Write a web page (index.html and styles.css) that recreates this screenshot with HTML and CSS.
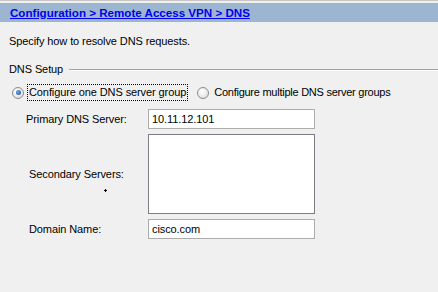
FILE: index.html
```html
<!DOCTYPE html>
<html lang="en">
<head>
    <meta charset="UTF-8">
    <title>Remote Access VPN - DNS</title>
    <link rel="stylesheet" href="styles.css">
</head>
<body>
    <div class="page">
        <div class="titlebar">
            <a href="#">Configuration &gt; Remote Access VPN &gt; DNS</a>
        </div>
        <p class="intro">Specify how to resolve DNS requests.</p>

        <div class="group">
            <div class="group-title">
                <span>DNS Setup</span>
                <div class="rule"></div>
            </div>

            <div class="choices">
                <label class="choice focused">
                    <span class="radio checked"></span>
                    <span class="choice-text">Configure one DNS server group</span>
                </label>
                <label class="choice">
                    <span class="radio"></span>
                    <span class="choice-text">Configure multiple DNS server groups</span>
                </label>
            </div>

            <div class="fields">
                <div class="field-label primary">Primary DNS Server:</div>
                <div class="box">10.11.12.101</div>

                <div class="field-label secondary">Secondary Servers:<span class="cursor"></span></div>
                <div class="box tall"></div>

                <div class="field-label">Domain Name:</div>
                <div class="box">cisco.com</div>
            </div>
        </div>
    </div>
</body>
</html>
```

FILE: styles.css
```css
body {
    margin: 0;
    background: #f0f0f0;
    font-family: 'Liberation Sans', Arial, sans-serif;
    font-size: 11px;
    letter-spacing: -0.1px;
    color: #000;
}
.page {
    border-top: 1px solid #c4c4c4;
    padding-top: 2px;
}
.titlebar {
    background: #9cb5d0;
    height: 19px;
    padding-left: 10px;
    display: flex;
    align-items: center;
}
.titlebar a {
    color: #0000f0;
    font-weight: bold;
    font-size: 11.6px;
    letter-spacing: 0;
    text-decoration: underline;
}
.intro {
    margin: 13px 0 0 9px;
    line-height: 13px;
}
.group {
    margin-top: 14px;
}
.group-title {
    display: flex;
    align-items: center;
    padding-left: 9px;
    height: 14px;
}
.group-title span {
    margin-right: 6px;
}
.rule {
    flex: 1;
    height: 0;
    border-top: 1px solid #a0a0a0;
    border-bottom: 1px solid #fff;
    margin-top: 2px;
}
.choices {
    display: flex;
    gap: 9px;
    margin: 8px 0 0 12px;
}
.choice {
    display: flex;
    align-items: center;
    gap: 3px;
}
.choice-text {
    padding: 1px 1px 2px;
    border: 1px dotted transparent;
}
.choice + .choice .choice-text {
    letter-spacing: -0.25px;
}
.choice.focused .choice-text {
    border-color: #000;
}
.radio {
    width: 10px;
    height: 10px;
    border-radius: 50%;
    border: 1px solid #8c8c8c;
    background: radial-gradient(circle at 40% 35%, #fff, #d8d8d8);
    display: flex;
    align-items: center;
    justify-content: center;
}
.radio.checked::after {
    content: "";
    width: 5px;
    height: 5px;
    border-radius: 50%;
    background: radial-gradient(circle at 40% 35%, #6fa6e0, #1d4f91);
}
.fields {
    display: grid;
    grid-template-columns: 148px 167px;
    row-gap: 5px;
    margin-top: 8px;
}
.field-label {
    display: flex;
    align-items: center;
    padding-left: 29px;
    position: relative;
}
.field-label.primary {
    padding-left: 26px;
}
.box {
    height: 18px;
    background: #fff;
    border: 1px solid #acacac;
    padding-left: 3px;
    display: flex;
    align-items: center;
}
.box.tall {
    height: 78px;
    border-color: #7c7c88;
}
.cursor {
    position: absolute;
    left: 104px;
    top: 55px;
    width: 3px;
    height: 3px;
    background: linear-gradient(#000, #000) center / 3px 1px no-repeat,
                linear-gradient(#000, #000) center / 1px 3px no-repeat;
}
```
